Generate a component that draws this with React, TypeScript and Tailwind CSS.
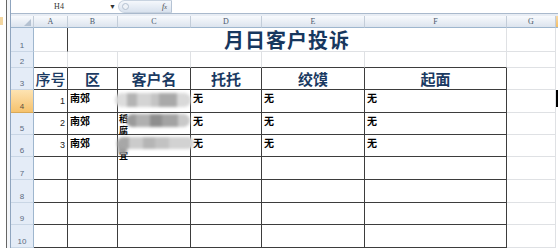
import React from "react";

const CJK = "font-['Noto_Sans_CJK_SC','Noto_Sans_CJK_JP',sans-serif]";

// gridline / table border styles
const LIGHT = "border-r border-b border-[#dfe1e4]";
const DARK = "border-r border-b border-[#3d3d3d]";
const ROWHEAD =
  "flex items-end justify-center pb-[1px] border-r border-b border-r-[#9eb6ce] border-b-[#c9d6e5] bg-[#e4ecf7] text-[8px] leading-none text-[#5b6b80] font-['Liberation_Sans',sans-serif]";
const COLHEAD =
  "flex items-center justify-center border-r border-b border-r-[#c3cdd9] border-b-[#9eb6ce] bg-linear-to-b from-[#f8fafd] to-[#dce4ee] text-[8px] leading-none text-[#4a586b] font-['Liberation_Serif',serif]";

const headers = ["序号", "区", "客户名", "托托", "绞馍", "起面"];

const dataRows = [
  { row: 4, idx: "1" },
  { row: 5, idx: "2" },
  { row: 6, idx: "3" },
];

function Blob({ row }: { row: number }) {
  if (row === 4) {
    return (
      <div className="absolute left-[-3px] top-[3px] flex h-[14px] w-[76px] overflow-hidden rounded-full blur-[1.5px]">
        <div className="w-[12px] bg-[#dcdcdc]" />
        <div className="w-[10px] bg-[#b4b4b4]" />
        <div className="w-[14px] bg-[#d4d4d4]" />
        <div className="w-[8px] bg-[#c4c4c4]" />
        <div className="w-[18px] bg-[#a9a9a9]" />
        <div className="flex-1 bg-[#d9d9d9]" />
      </div>
    );
  }
  if (row === 5) {
    return (
      <>
        <span className={`absolute left-[1px] top-[1px] text-[9px] font-bold leading-[9px] text-black ${CJK}`}>稻</span>
        <span className={`absolute left-[1px] top-[13px] text-[9px] font-bold leading-[9px] text-black ${CJK}`}>腐</span>
        <div className="absolute left-[8px] top-[1px] flex h-[13px] w-[64px] overflow-hidden rounded-full blur-[1.5px]">
          <div className="w-[10px] bg-[#9a9a9a]" />
          <div className="w-[14px] bg-[#b0b0b0]" />
          <div className="w-[12px] bg-[#8e8e8e]" />
          <div className="w-[16px] bg-[#a3a3a3]" />
          <div className="flex-1 bg-[#c9c9c9]" />
        </div>
      </>
    );
  }
  return (
    <>
      <span className={`absolute left-[1px] top-[16px] text-[9px] font-bold leading-[9px] text-black ${CJK}`}>宜</span>
      <div className="absolute left-[0px] top-[8px] h-[11px] w-[9px] bg-[#9d9d9d] blur-[1.5px]" />
      <div className="absolute left-[-1px] top-[2px] flex h-[12px] w-[77px] overflow-hidden rounded-full blur-[1.5px]">
        <div className="w-[12px] bg-[#a7a7a7]" />
        <div className="w-[14px] bg-[#cbcbcb]" />
        <div className="w-[12px] bg-[#b5b5b5]" />
        <div className="w-[14px] bg-[#c2c2c2]" />
        <div className="flex-1 bg-[#d2d2d2]" />
      </div>
    </>
  );
}

export default function App() {
  return (
    <div className="flex h-[248px] w-[558px] overflow-hidden bg-white">
      {/* left window edge */}
      <div className="flex h-full w-[10px] shrink-0">
        <div className="w-[6px]">
          <div className="mt-[17px] h-[8px] w-[3px] bg-[#f3d6a0]" />
        </div>
        <div className="w-px bg-[#666]" />
        <div className="w-[3px] bg-[#f4f6f9]" />
      </div>

      <div className="flex min-w-0 flex-1 flex-col border-l border-[#8fa5bf]">
        {/* formula bar */}
        <div className="flex h-[14px] shrink-0 border-b border-[#a9b9cc] bg-white">
          <div className="flex w-[96px] items-center justify-center text-[8px] leading-none text-[#333] font-['Liberation_Serif',serif]">
            H4
          </div>
          <div className="flex w-[11px] items-center justify-center text-[7px] leading-none text-[#333]">▼</div>
          <div className="relative flex w-[54px] items-center justify-end rounded-l-full border border-r-[#b5c3d4] border-[#c8d3e0] bg-linear-to-b from-[#f5f8fc] to-[#d9e2ee] pr-[4px]">
            <div className="absolute left-[3px] top-[2px] h-[7px] w-[7px] rounded-full border border-[#b3c0d0] bg-[#eef2f7]" />
            <span className="text-[8px] italic leading-none text-[#444] font-['Liberation_Serif',serif]">
              f<span className="text-[6px]">x</span>
            </span>
          </div>
          <div className="flex-1" />
        </div>
        <div className="h-[2px] shrink-0 bg-[#e8edf4]" />

        {/* sheet grid */}
        <div className="grid grid-cols-[23px_34px_50px_73px_71px_103px_142px_49px_2px] grid-rows-[12px_24px_16px_22px_23px_22px_22px_23px_23px_22px_23px]">
          {/* column headers */}
          <div className={`${COLHEAD} relative`}>
            <svg className="absolute bottom-[1px] right-[2px]" width="7" height="7" viewBox="0 0 7 7">
              <polygon points="7,0 7,7 0,7" fill="#b4c1d1" />
            </svg>
          </div>
          {["A", "B", "C", "D", "E", "F", "G"].map((c) => (
            <div key={c} className={COLHEAD}>
              {c}
            </div>
          ))}
          <div className="border-b border-[#9eb6ce] bg-linear-to-b from-[#fbd9a2] to-[#f3bf66]" />

          {/* row 1: title */}
          <div className={ROWHEAD}>1</div>
          <div className="border-r border-b border-r-[#3d3d3d] border-b-[#dfe1e4]" />
          <div
            className={`col-span-5 flex items-center justify-center border-r border-b border-[#dfe1e4] text-[20px] font-bold leading-none tracking-[1px] text-[#17375e] ${CJK}`}
          >
            月日客户投诉
          </div>
          <div className={LIGHT} />
          <div />

          {/* row 2 */}
          <div className={ROWHEAD}>2</div>
          {[0, 1, 2, 3, 4, 5].map((i) => (
            <div key={i} className="border-r border-b border-r-[#dfe1e4] border-b-[#3d3d3d]" />
          ))}
          <div className={LIGHT} />
          <div />

          {/* row 3: table header */}
          <div className={ROWHEAD}>3</div>
          {headers.map((h, i) => (
            <div
              key={h}
              className={`${DARK} flex items-center justify-center text-[15px] leading-none text-[#1b3a62] ${CJK} ${
                i === 0 ? "font-medium" : "font-bold"
              }`}
            >
              {h}
            </div>
          ))}
          <div className={LIGHT} />
          <div />

          {/* rows 4-6: data */}
          {dataRows.map((r) => (
            <React.Fragment key={r.row}>
              <div
                className={
                  r.row === 4
                    ? "flex items-end justify-center pb-[1px] border-r border-b border-r-[#9eb6ce] border-b-[#d9a957] bg-linear-to-b from-[#fde3b2] to-[#f6c26c] text-[8px] leading-none text-[#5b5040] font-['Liberation_Sans',sans-serif]"
                    : ROWHEAD
                }
              >
                {r.row}
              </div>
              <div className={`${DARK} flex items-end justify-end pb-[6px] pr-[2px] text-[9px] leading-none text-[#222] font-['Liberation_Sans',sans-serif]`}>
                {r.idx}
              </div>
              <div className={`${DARK} pl-[2px] pt-[3px] text-[10px] font-bold leading-none text-black ${CJK}`}>南郊</div>
              <div className={`${DARK} relative z-10`}>
                <Blob row={r.row} />
              </div>
              {[0, 1, 2].map((i) => (
                <div key={i} className={`${DARK} pl-[2px] pt-[3px] text-[10px] font-bold leading-none text-black ${CJK}`}>
                  无
                </div>
              ))}
              <div className={LIGHT} />
              <div className={r.row === 4 ? "mb-[6px] bg-black" : ""} />
            </React.Fragment>
          ))}

          {/* rows 7-10: empty table rows */}
          {[7, 8, 9, 10].map((n) => (
            <React.Fragment key={n}>
              <div className={ROWHEAD}>{n}</div>
              {[0, 1, 2, 3, 4, 5].map((i) => (
                <div key={i} className={DARK} />
              ))}
              <div className={LIGHT} />
              <div />
            </React.Fragment>
          ))}
        </div>
      </div>
    </div>
  );
}
